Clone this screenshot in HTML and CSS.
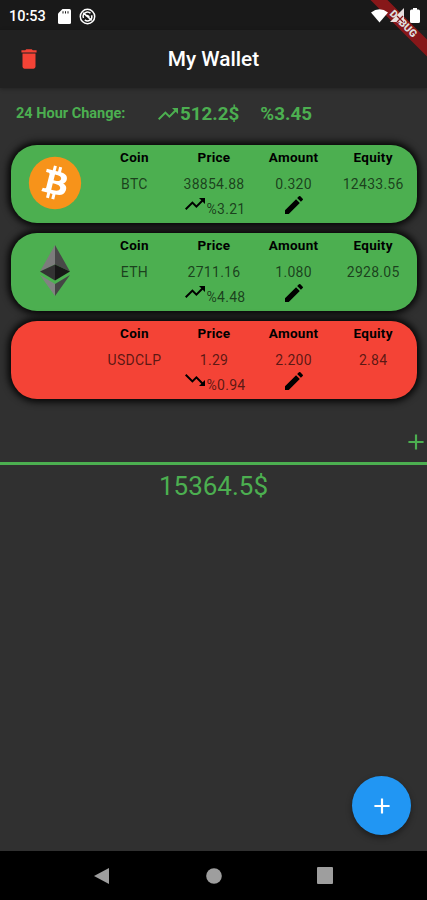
FILE: index.html
```html
<!DOCTYPE html>
<html lang="en">
<head>
  <meta charset="utf-8">
  <title>My Wallet</title>
  <link rel="stylesheet" href="styles.css">
</head>
<body>
  <svg class="sprite" width="0" height="0">
    <symbol id="up" viewBox="0 0 24 24"><path d="M16 6l2.29 2.29-4.88 4.88-4-4L2 16.59 3.41 18l6-6 4 4 6.3-6.29L22 12V6z"/></symbol>
    <symbol id="down" viewBox="0 0 24 24"><path d="M16 18l2.29-2.29-4.88-4.88-4 4L2 7.41 3.41 6l6 6 4-4 6.3 6.29L22 12v6z"/></symbol>
    <symbol id="edit" viewBox="0 0 24 24"><path d="M3 17.25V21h3.75L17.81 9.94l-3.75-3.75L3 17.25zM20.71 7.04a1 1 0 0 0 0-1.41l-2.34-2.34a1 1 0 0 0-1.41 0l-1.83 1.83 3.75 3.75 1.83-1.83z"/></symbol>
    <symbol id="add" viewBox="0 0 24 24"><path d="M19 13h-6v6h-2v-6H5v-2h6V5h2v6h6v2z"/></symbol>
  </svg>

  <div class="phone">
    <div class="debug"><span>DEBUG</span></div>

    <div class="status-bar">
      <span class="time">10:53</span>
      <svg class="sd" width="13" height="15" viewBox="0 0 13 15"><path d="M4.500 0H11.500Q13 0 13 1.500V13.500Q13 15 11.500 15H1.500Q0 15 0 13.500V4.500z"/><path class="slot" d="M4.500 2.200h1v2.400h-1zM7 2.200h1v2.400H7zM9.500 2.200h1v2.400h-1z"/></svg>
      <svg class="sync" width="17" height="17" viewBox="0 0 17 17"><circle cx="8.500" cy="8.500" r="7.200"/><path d="M4.500 10a4.300 4.300 0 0 1 7-4.700M12.600 7.200a4.300 4.300 0 0 1-6.800 4.700M4.200 4.800l8.500 7.600M6.700 8.300a2 2 0 0 1 3.500 1"/></svg>
      <div class="system">
        <svg width="17" height="14" viewBox="0 0 17 14"><path d="M8.500 13.500L0 3.500Q8.500-3 17 3.500z"/></svg>
        <svg class="signal" width="15" height="15" viewBox="0 0 15 15"><path d="M14 0v14H0z"/><path class="slash" d="M7 8l6 6M13 8l-6 6"/></svg>
        <svg class="battery" width="10" height="15" viewBox="0 0 10 15"><path d="M3 0h4v1.500h1.500Q10 1.500 10 3v10.500Q10 15 8.500 15h-7Q0 15 0 13.500V3Q0 1.500 1.500 1.500H3z"/></svg>
      </div>
    </div>

    <div class="app-bar">
      <svg class="trash" width="26" height="26" viewBox="0 0 24 24"><path d="M6 19c0 1.100.900 2 2 2h8c1.100 0 2-.900 2-2V7H6v12zM19 4h-3.500l-1-1h-5l-1 1H5v2h14V4z"/></svg>
      <h1>My Wallet</h1>
    </div>

    <div class="change">
      <span class="label">24 Hour Change:</span>
      <svg class="icon"><use href="#up"/></svg>
      <span class="value">512.2$</span>
      <span class="percent">%3.45</span>
    </div>

    <div class="coins">
      <div class="card">
        <div class="logo">
          <svg width="54" height="54" viewBox="0 0 64 64">
            <circle cx="32" cy="32" r="31" fill="#f7931a"/>
            <path fill="#fff" d="M46.100 27.400c.6-4.300-2.600-6.500-7-8l1.400-5.700-3.500-.9-1.400 5.500-2.800-.6 1.400-5.600-3.400-.9-1.500 5.700-2.200-.5-4.800-1.200-.9 3.700s2.600.6 2.500.6c1.400.4 1.700 1.300 1.600 2l-3.900 15.800c-.2.400-.6 1.100-1.600.8l-2.500-.6-1.700 4 7 1.800-1.400 5.800 3.400.9 1.500-5.800 2.700.7-1.400 5.700 3.500.9 1.400-5.800c5.900 1.100 10.400.7 12.300-4.700 1.500-4.300-.1-6.800-3.200-8.400 2.300-.5 4-2 4.500-5.200zm-8 11.100c-1.100 4.300-8.300 2-10.600 1.400l1.900-7.600c2.300.6 9.800 1.700 8.700 6.200zm1.100-11.100c-1 3.900-7 1.900-8.900 1.400l1.700-6.900c2 .5 8.200 1.400 7.200 5.500z"/>
          </svg>
        </div>
        <div class="col"><b>Coin</b><span>BTC</span></div>
        <div class="col"><b>Price</b><span>38854.88</span><div class="trend"><svg class="icon"><use href="#up"/></svg><span>%3.21</span></div></div>
        <div class="col"><b>Amount</b><span>0.320</span><svg class="icon edit"><use href="#edit"/></svg></div>
        <div class="col"><b>Equity</b><span>12433.56</span></div>
      </div>

      <div class="card">
        <div class="logo">
          <svg width="32" height="52" viewBox="0 0 32 52">
            <path fill="#7c7c7c" d="M16 0L1 26.500l15-7z"/>
            <path fill="#484848" d="M16 0l15 26.500-15-7z"/>
            <path fill="#333" d="M16 19.500v16L1 26.500z"/>
            <path fill="#171717" d="M16 19.500v16l15-9z"/>
            <path fill="#828282" d="M1 30l15 9v12z"/>
            <path fill="#454545" d="M31 30l-15 9v12z"/>
          </svg>
        </div>
        <div class="col"><b>Coin</b><span>ETH</span></div>
        <div class="col"><b>Price</b><span>2711.16</span><div class="trend"><svg class="icon"><use href="#up"/></svg><span>%4.48</span></div></div>
        <div class="col"><b>Amount</b><span>1.080</span><svg class="icon edit"><use href="#edit"/></svg></div>
        <div class="col"><b>Equity</b><span>2928.05</span></div>
      </div>

      <div class="card down">
        <div class="logo"></div>
        <div class="col"><b>Coin</b><span>USDCLP</span></div>
        <div class="col"><b>Price</b><span>1.29</span><div class="trend"><svg class="icon"><use href="#down"/></svg><span>%0.94</span></div></div>
        <div class="col"><b>Amount</b><span>2.200</span><svg class="icon edit"><use href="#edit"/></svg></div>
        <div class="col"><b>Equity</b><span>2.84</span></div>
      </div>
    </div>

    <div class="add-row"><svg width="26" height="26"><use href="#add"/></svg></div>
    <div class="total">15364.5$</div>

    <div class="fab"><svg width="26" height="26"><use href="#add"/></svg></div>

    <div class="nav-bar">
      <svg width="17" height="18" viewBox="0 0 17 18"><path d="M16 1v16L1 9z"/></svg>
      <svg width="16" height="16" viewBox="0 0 16 16"><circle cx="8" cy="8" r="7.800"/></svg>
      <svg width="16" height="17" viewBox="0 0 16 17"><rect width="16" height="17" rx="1"/></svg>
    </div>
  </div>
</body>
</html>
```

FILE: styles.css
```css
* {
  box-sizing: border-box;
}

body {
  margin: 0;
  background: #303030;
  color: white;
  font-family: Roboto, sans-serif;
}

svg {
  display: block;
  flex: none;
  fill: currentColor;
}

.sprite {
  position: absolute;
}

.icon {
  width: 24px;
  height: 24px;
}

.phone {
  position: relative;
  width: 427px;
  height: 900px;
  overflow: hidden;
  display: flex;
  flex-direction: column;
}

/* corner ribbon */
.debug {
  position: absolute;
  top: 18px;
  right: -36px;
  width: 120px;
  height: 12px;
  background: #871719;
  transform: rotate(45deg);
  text-align: center;
  font-size: 10.5px;
  line-height: 12px;
  font-weight: 900;
  color: #ddd;
  z-index: 1;
}

.status-bar {
  height: 30px;
  background: #191919;
  display: flex;
  align-items: center;
  padding: 2px 7px 0 9px;
}

.time {
  width: 49px;
  font-size: 14.5px;
  font-weight: 500;
}

.slot {
  fill: #191919;
}

.sync {
  margin-left: 8px;
  fill: none;
  stroke: white;
  stroke-width: 1.5;
}

.system {
  position: relative;
  z-index: 2;
  margin-left: auto;
  margin-top: -1px;
  display: flex;
  align-items: center;
}

.signal {
  margin: 0 5px 0 2px;
}

.signal path {
  fill: #e8e0e0;
}

.signal .slash {
  stroke: #871719;
  stroke-width: 1.2;
}

.app-bar {
  height: 58px;
  background: #212121;
  display: grid;
  grid-template-columns: 60px 1fr 60px;
  align-items: center;
  box-shadow: 0 1px 4px rgba(0, 0, 0, 0.3);
}

.trash {
  margin-left: 16px;
  margin-top: -1px;
  color: #f44336;
}

.app-bar h1 {
  margin: 0;
  font-size: 20.8px;
  font-weight: 500;
  text-align: center;
}

.change {
  height: 51px;
  display: flex;
  align-items: center;
  padding-left: 16px;
  color: #4caf50;
  font-weight: 700;
}

.change .label {
  width: 140px;
  font-size: 14.5px;
}

.change .value,
.change .percent {
  font-size: 18.8px;
}

.change .percent {
  margin-left: 21px;
}

.coins {
  display: flex;
  flex-direction: column;
  gap: 10px;
  padding: 5.500px 10px 0 11px;
}

.card {
  height: 78px;
  display: grid;
  grid-template-columns: repeat(5, 1fr);
  padding: 0 4px;
  border-radius: 26px;
  background: #4caf50;
  box-shadow: 0 0 7px 3px rgba(0, 0, 0, 0.9);
  color: black;
}

.card.down {
  background: #f44336;
}

.logo {
  display: flex;
  align-items: center;
  justify-content: center;
  padding-bottom: 5px;
}

.col {
  display: flex;
  flex-direction: column;
  align-items: center;
  font-size: 14px;
  letter-spacing: 0.27px;
}

.col b {
  height: 25px;
  line-height: 25px;
  font-size: 13.5px;
}

.col span {
  line-height: 28px;
  color: rgba(0, 0, 0, 0.65);
}

.trend {
  display: flex;
  margin-top: -6px;
}

.trend span {
  font-size: 14px;
  line-height: 34px;
}

.edit {
  margin-top: -5px;
}

.add-row {
  height: 66px;
  display: flex;
  justify-content: flex-end;
  align-items: flex-end;
  padding-bottom: 7px;
  margin-right: -1.500px;
  border-bottom: 3px solid #4caf50;
  color: #4caf50;
}

.total {
  flex: 1;
  padding-top: 6px;
  text-align: center;
  font-size: 26px;
  color: #4caf50;
}

.fab {
  position: absolute;
  right: 16px;
  bottom: 65px;
  width: 59px;
  height: 59px;
  display: flex;
  align-items: center;
  justify-content: center;
  border-radius: 50%;
  background: #2196f3;
  box-shadow: 0 3px 6px rgba(0, 0, 0, 0.4);
}

.nav-bar {
  height: 49px;
  background: black;
  color: #9e9e9e;
  display: flex;
  align-items: center;
  justify-content: space-between;
  padding: 0 94px 0 93px;
}
```
